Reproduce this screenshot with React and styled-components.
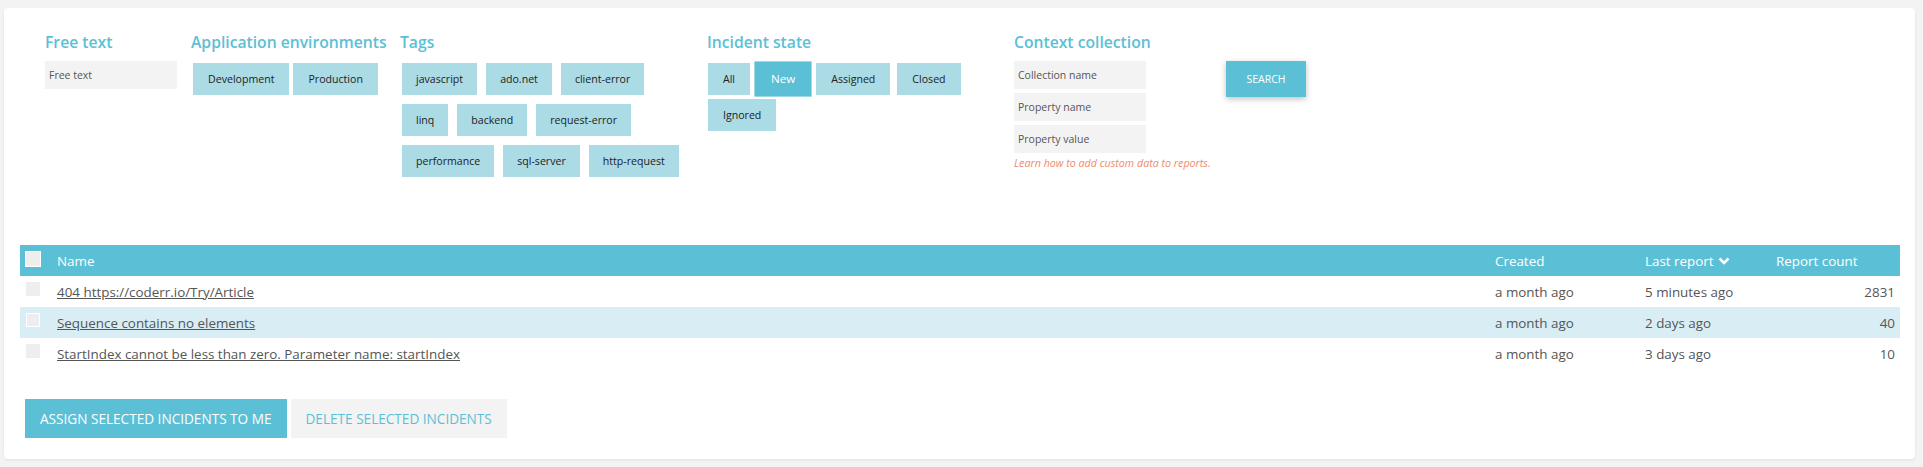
import React from "react";
import styled, { createGlobalStyle } from "styled-components";

const GlobalStyle = createGlobalStyle`
  body {
    margin: 0;
    padding: 8px 8px 8px 4px;
    background: #f3f3f3;
    font-family: "Open Sans", "Noto Sans", sans-serif;
    color: #555;
  }
`;

const BLUE = "#5bc0d5";
const LIGHT = "#abdbe5";

const Card = styled.div`
  background: #fff;
  border-radius: 4px;
  box-shadow: 0 1px 3px rgba(0, 0, 0, 0.08);
  padding: 23px 15px 21px 16px;
`;

const Filters = styled.div`
  display: grid;
  grid-template-columns: 146px 209px 307px 307px 212px auto;
  padding-left: 25px;
  height: 214px;
  align-items: start;
`;

const Column = styled.div`
  display: flex;
  flex-direction: column;
`;

const Heading = styled.h3`
  margin: 0 0 8px;
  font-size: 15.7px;
  font-weight: 600;
  line-height: 22px;
  color: ${BLUE};
  white-space: nowrap;
`;

const Input = styled.input`
  box-sizing: border-box;
  width: 132px;
  height: 28px;
  border: none;
  background: #f3f3f3;
  padding: 0 4px;
  font-family: inherit;
  font-size: 10.5px;
  color: #555;
  outline: none;
  &::placeholder {
    color: #555;
  }
`;

const Chips = styled.div`
  display: flex;
  flex-wrap: wrap;
  gap: ${(p) => p.$gap || "4px"};
  max-width: 290px;
  margin-top: 2px;
  padding-left: ${(p) => p.$indent || "2px"};
`;

const Chip = styled.span`
  box-sizing: border-box;
  height: 32px;
  line-height: 32px;
  padding: 0 ${(p) => p.$pad || "14px"};
  background: ${(p) => (p.$active ? BLUE : LIGHT)};
  color: ${(p) => (p.$active ? "#fff" : "#222")};
  font-size: 10.6px;
  white-space: nowrap;
  transform: ${(p) => (p.$active ? "scale(1.1)" : "none")};
`;

const Stack = styled.div`
  display: flex;
  flex-direction: column;
  gap: 4px;
`;

const HelpLink = styled.a`
  margin-top: 3px;
  font-size: 10.7px;
  font-style: italic;
  color: #ef8a6a;
  text-decoration: none;
  white-space: nowrap;
`;

const SearchButton = styled.button`
  margin-top: 30px;
  width: 80px;
  height: 36px;
  border: none;
  background: ${BLUE};
  color: #fff;
  font-family: inherit;
  font-size: 10.5px;
  text-transform: uppercase;
  box-shadow: 0 2px 6px rgba(0, 0, 0, 0.25);
`;

const Row = styled.div`
  display: grid;
  grid-template-columns: 37px 1fr 150px 131px 124px;
  align-items: center;
  height: 31px;
  font-size: 13.4px;
  background: ${(p) => (p.$head ? BLUE : p.$alt ? "#d9edf4" : "transparent")};
  color: ${(p) => (p.$head ? "#fff" : "#555")};
`;

const Box = styled.span`
  box-sizing: border-box;
  display: block;
  width: ${(p) => (p.$head ? "16px" : "14px")};
  height: ${(p) => (p.$head ? "16px" : "14px")};
  margin-left: ${(p) => (p.$head ? "5px" : "6px")};
  margin-top: ${(p) => (p.$head ? "-4px" : "-5px")};
  background: #eee;
  border: 1px solid ${(p) => (p.$white ? "#fff" : "#eee")};
`;

const NameLink = styled.a`
  color: #555;
  text-decoration: underline;
  cursor: pointer;
`;

const Count = styled.span`
  text-align: right;
  padding-right: 5px;
`;

const Sorted = styled.span`
  display: inline-flex;
  align-items: center;
  gap: 4px;
`;

const Actions = styled.div`
  display: flex;
  gap: 4px;
  margin-top: 30px;
  padding-left: 5px;
`;

const ActionButton = styled.button`
  height: 39px;
  padding: 0 15px;
  border: none;
  background: ${(p) => (p.$primary ? BLUE : "#f3f3f3")};
  color: ${(p) => (p.$primary ? "#fff" : BLUE)};
  font-family: inherit;
  font-size: 13.6px;
  text-transform: uppercase;
`;

const tags = [
  "javascript",
  "ado.net",
  "client-error",
  "linq",
  "backend",
  "request-error",
  "performance",
  "sql-server",
  "http-request",
];

const states = ["All", "New", "Assigned", "Closed", "Ignored"];

const incidents = [
  { name: "404 https://coderr.io/Try/Article", created: "a month ago", last: "5 minutes ago", count: 2831 },
  { name: "Sequence contains no elements", created: "a month ago", last: "2 days ago", count: 40 },
  { name: "StartIndex cannot be less than zero. Parameter name: startIndex", created: "a month ago", last: "3 days ago", count: 10 },
];

export default function App() {
  return (
    <>
      <GlobalStyle />
      <Card>
        <Filters>
          <Column>
            <Heading>Free text</Heading>
            <Input placeholder="Free text" />
          </Column>
          <Column>
            <Heading>Application environments</Heading>
            <Chips $gap="4px">
              <Chip $pad="15px">Development</Chip>
              <Chip $pad="15px">Production</Chip>
            </Chips>
          </Column>
          <Column>
            <Heading>Tags</Heading>
            <Chips $gap="9px">
              {tags.map((t) => (
                <Chip key={t}>{t}</Chip>
              ))}
            </Chips>
          </Column>
          <Column>
            <Heading>Incident state</Heading>
            <Chips $gap="4px 7px" $indent="1px">
              {states.map((s) => (
                <Chip key={s} $pad="15px" $active={s === "New"}>
                  {s}
                </Chip>
              ))}
            </Chips>
          </Column>
          <Column>
            <Heading>Context collection</Heading>
            <Stack>
              <Input placeholder="Collection name" />
              <Input placeholder="Property name" />
              <Input placeholder="Property value" />
            </Stack>
            <HelpLink>Learn how to add custom data to reports.</HelpLink>
          </Column>
          <Column>
            <SearchButton>Search</SearchButton>
          </Column>
        </Filters>

        <div>
          <Row $head>
            <Box $head $white />
            <span>Name</span>
            <span>Created</span>
            <Sorted>
              Last report
              <svg width="12" height="10" viewBox="0 0 12 10">
                <polyline points="1.5,2.5 6,7 10.5,2.5" fill="none" stroke="#fff" strokeWidth="2.6" />
              </svg>
            </Sorted>
            <span>Report count</span>
          </Row>
          {incidents.map((i, idx) => (
            <Row key={i.name} $alt={idx === 1}>
              <Box $white={idx === 1} />
              <span>
                <NameLink>{i.name}</NameLink>
              </span>
              <span>{i.created}</span>
              <span>{i.last}</span>
              <Count>{i.count}</Count>
            </Row>
          ))}
        </div>

        <Actions>
          <ActionButton $primary>Assign selected incidents to me</ActionButton>
          <ActionButton>Delete selected incidents</ActionButton>
        </Actions>
      </Card>
    </>
  );
}
